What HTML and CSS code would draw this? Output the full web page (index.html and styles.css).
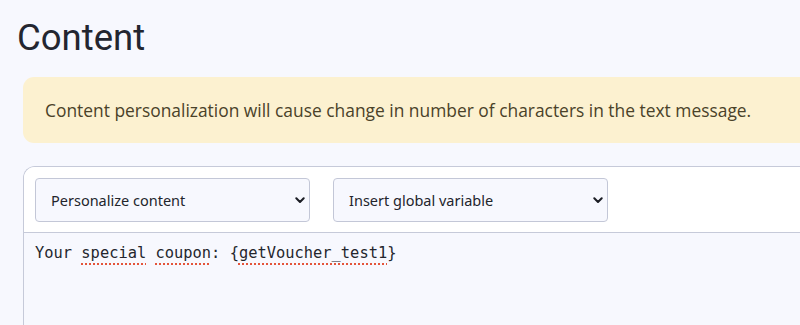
FILE: index.html
```html
<!DOCTYPE html>
<html lang="en">
<head>
<meta charset="utf-8">
<title>Content</title>
<link rel="stylesheet" href="styles.css">
</head>
<body>
<main class="page">
  <h1 class="title">Content</h1>
  <div class="section">
    <div class="alert">Content personalization will cause change in number of characters in the text message.</div>
    <div class="editor">
      <div class="toolbar">
        <div class="select-wrap">
          <select class="select"><option>Personalize content</option></select>
          <svg class="chevron" width="10" height="7" viewBox="0 0 10 7"><path d="M1.3 1.3 L5 5 L8.7 1.3" fill="none" stroke="#1b1d24" stroke-width="2" stroke-linecap="round" stroke-linejoin="round"/></svg>
        </div>
        <div class="select-wrap">
          <select class="select"><option>Insert global variable</option></select>
          <svg class="chevron" width="10" height="7" viewBox="0 0 10 7"><path d="M1.3 1.3 L5 5 L8.7 1.3" fill="none" stroke="#1b1d24" stroke-width="2" stroke-linecap="round" stroke-linejoin="round"/></svg>
        </div>
      </div>
      <div class="body-text">Your <span class="spell">special</span> <span class="spell">coupon</span>: {<span class="spell">getVoucher_test1</span>}</div>
    </div>
  </div>
</main>
</body>
</html>
```

FILE: styles.css
```css
html, body {
  margin: 0;
  padding: 0;
  background: #f7f8fe;
  overflow: hidden;
}
.page {
  width: 800px;
  height: 325px;
  overflow: hidden;
}
.title {
  margin: 16px 0 0 17px;
  font-family: Roboto, "Noto Sans", sans-serif;
  font-weight: 400;
  font-size: 36.5px;
  line-height: 44px;
  color: #232630;
}
.section {
  margin: 17px 0 0 23px;
  display: flex;
  flex-direction: column;
  gap: 23px;
}
.alert {
  height: 66px;
  box-sizing: border-box;
  padding: 0 22px;
  display: flex;
  align-items: center;
  background: #fcf1d0;
  border-radius: 11px 0 0 11px;
  font-family: "Open Sans", sans-serif;
  font-size: 17.4px;
  color: #4a4229;
  white-space: nowrap;
}
.editor {
  border: 1px solid #c6cad9;
  border-right: none;
  border-bottom: none;
  border-radius: 12px 0 0 0;
  overflow: hidden;
}
.toolbar {
  display: flex;
  gap: 23px;
  padding: 11px 11px 10px;
  background: #ffffff;
  border-bottom: 1px solid #c6cad9;
}
.select-wrap {
  position: relative;
  width: 275px;
  height: 44px;
}
.select {
  appearance: none;
  -webkit-appearance: none;
  width: 100%;
  height: 100%;
  box-sizing: border-box;
  margin: 0;
  padding: 0 0 0 15px;
  border: 1px solid #c3c7d7;
  border-radius: 4px;
  background: #f7f8fe;
  font-family: "Noto Sans", sans-serif;
  font-size: 14.5px;
  color: #23252c;
}
.chevron {
  position: absolute;
  right: 5px;
  top: 19px;
  pointer-events: none;
}
.body-text {
  height: 92px;
  box-sizing: border-box;
  padding: 8px 11px;
  background: #f7f8fe;
  font-family: "DejaVu Sans Mono", monospace;
  font-size: 15.4px;
  line-height: 24px;
  color: #24262d;
}
.spell {
  text-decoration: underline dotted #e4553b;
  text-decoration-thickness: 2px;
  text-underline-offset: 5px;
}
```
